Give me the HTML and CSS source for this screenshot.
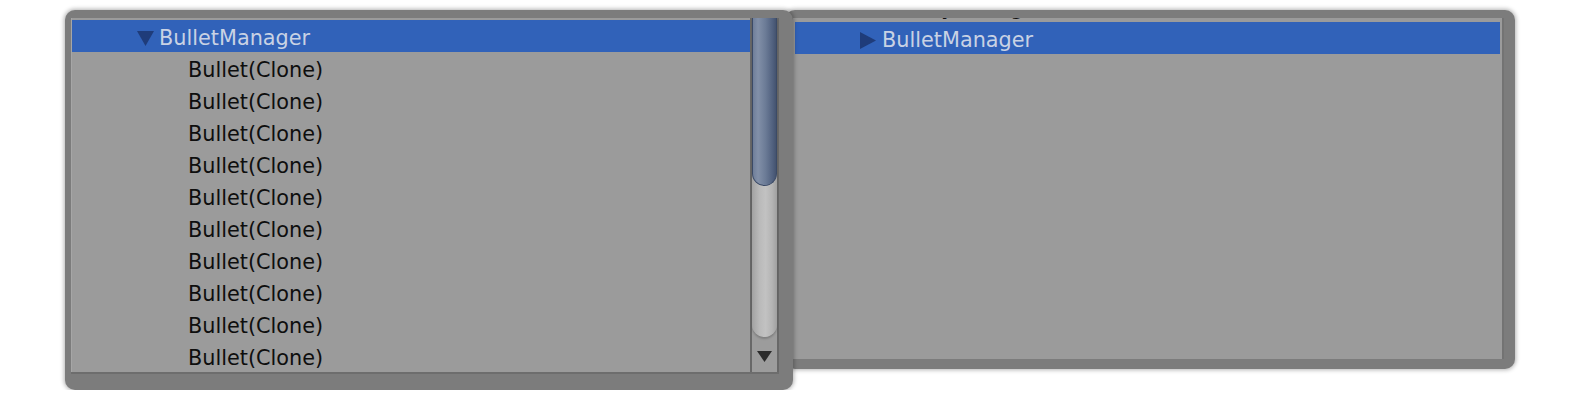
FILE: index.html
```html
<!DOCTYPE html>
<html>
<head>
<meta charset="utf-8">
<link rel="stylesheet" href="styles.css">
</head>
<body>
<div class="stage">
  <div class="window win-left">
    <div class="view">
      <div class="list">
        <div class="row selected">
          <span class="arrow"><svg width="17" height="15" viewBox="0 0 17 15"><polygon points="0,0 17,0 8.5,15" fill="#1f3c7a"/></svg></span>
          <span class="label">BulletManager</span>
        </div>
        <div class="row child"><span class="label">Bullet(Clone)</span></div>
        <div class="row child"><span class="label">Bullet(Clone)</span></div>
        <div class="row child"><span class="label">Bullet(Clone)</span></div>
        <div class="row child"><span class="label">Bullet(Clone)</span></div>
        <div class="row child"><span class="label">Bullet(Clone)</span></div>
        <div class="row child"><span class="label">Bullet(Clone)</span></div>
        <div class="row child"><span class="label">Bullet(Clone)</span></div>
        <div class="row child"><span class="label">Bullet(Clone)</span></div>
        <div class="row child"><span class="label">Bullet(Clone)</span></div>
        <div class="row child"><span class="label">Bullet(Clone)</span></div>
      </div>
      <div class="scrollbar">
        <div class="track">
          <div class="groove"><div class="thumb"></div></div>
        </div>
        <div class="btn-down"><svg width="15" height="11" viewBox="0 0 15 11"><polygon points="0,0 15,0 7.5,11" fill="#2b2b2b"/></svg></div>
      </div>
    </div>
  </div>
  <div class="window win-right">
    <div class="view2">
      <div class="list2">
        <div class="row">
          <span class="arrow"></span>
          <span class="label">EnemyManager</span>
        </div>
        <div class="row selected">
          <span class="arrow"><svg width="16" height="17" viewBox="0 0 16 17"><polygon points="0,0 16,8.5 0,17" fill="#1f3c7a"/></svg></span>
          <span class="label">BulletManager</span>
        </div>
      </div>
    </div>
  </div>
</div>
</body>
</html>
```
FILE: styles.css
```css
html, body {
  margin: 0;
  padding: 0;
  background: #ffffff;
}

body {
  font-family: "DejaVu Sans", Verdana, sans-serif;
  font-size: 20.8px;
  color: #0e0e0e;
}

.stage {
  display: flex;
  align-items: flex-start;
  padding: 10px 0 0 65px;
}

.window {
  background: #7c7c7c;
  border-radius: 10px;
  box-shadow: 0 0 4px 1px rgba(0, 0, 0, 0.3);
  box-sizing: border-box;
}

.win-left {
  position: relative;
  z-index: 2;
  width: 728px;
  height: 380px;
  padding: 8px 14px 16px 6px;
}

.win-right {
  position: relative;
  z-index: 1;
  width: 730px;
  height: 359px;
  margin-left: -8px;
  padding: 8px 11px 10px 8px;
}

.view {
  display: flex;
  height: 356px;
  border-bottom: 2px solid #6d6d6d;
  box-sizing: border-box;
}

.list {
  flex: 1;
  background: #9b9b9b;
  border-left: 1px solid #a6a6a6;
  padding-top: 2px;
  overflow: hidden;
}

.row {
  display: flex;
  align-items: center;
  height: 32px;
  padding: 4px 0 0 65px;
  box-sizing: border-box;
  white-space: nowrap;
}

.row.child {
  padding-left: 116px;
}

.row.selected {
  background: #3162b9;
  color: #c9d2e4;
}

.arrow {
  display: flex;
  align-items: center;
  width: 22px;
  flex: none;
}

.scrollbar {
  width: 25px;
  flex: none;
  display: flex;
  flex-direction: column;
  background: #9c9c9c;
  border-left: 2px solid #686868;
  border-right: 2px solid #686868;
}

.track {
  height: 319px;
  flex: none;
}

.groove {
  height: 100%;
  border-radius: 0 0 13px 13px;
  background: linear-gradient(90deg, #a2a2a2 0%, #bababa 30%, #c2c2c2 55%, #b4b4b4 80%, #a0a0a0 100%);
  box-shadow: 0 2px 2px rgba(0, 0, 0, 0.18);
}

.thumb {
  height: 168px;
  box-sizing: border-box;
  border: 1px solid #3b4a66;
  border-top: none;
  border-radius: 0 0 13px 13px;
  background: linear-gradient(90deg, #6f7e99 0%, #8290a8 22%, #6b7b96 55%, #51617f 85%, #44536f 100%);
}

.btn-down {
  flex: 1;
  display: flex;
  align-items: center;
  justify-content: center;
  padding-top: 4px;
  box-sizing: border-box;
}

.view2 {
  height: 341px;
  background: #9b9b9b;
  border-right: 2px solid #737373;
  padding: 0 2px;
  overflow: hidden;
  box-sizing: border-box;
}

.list2 {
  margin-top: -28px;
}
```
